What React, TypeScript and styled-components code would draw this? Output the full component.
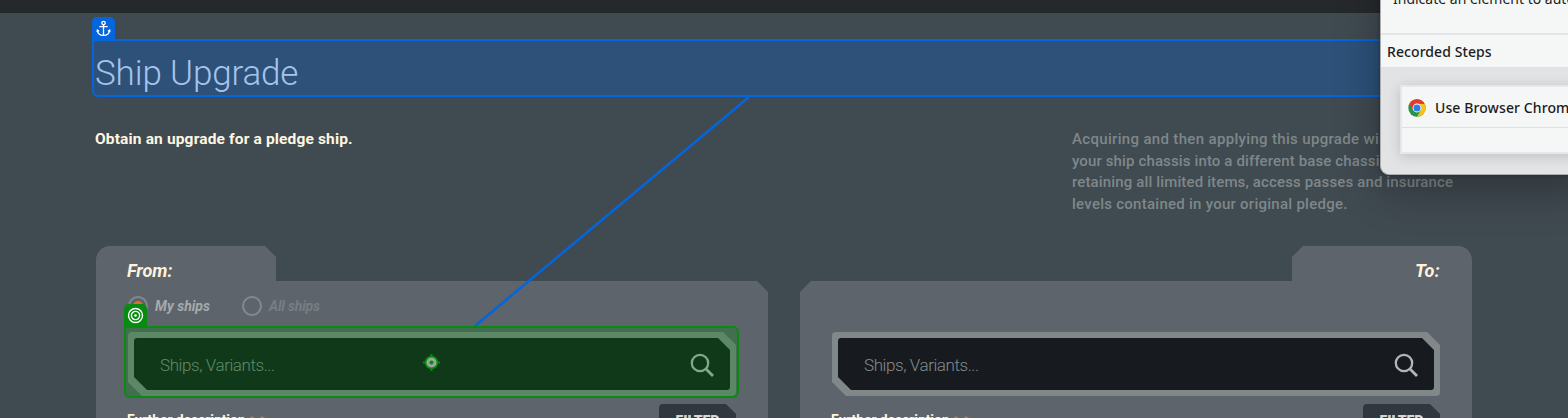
import React from 'react';
import styled, { createGlobalStyle } from 'styled-components';

const Global = createGlobalStyle`
  * { box-sizing: border-box; }
  html, body { margin: 0; width: 1568px; height: 418px; overflow: hidden; }
  body { background: #404a51; font-family: Roboto, "Liberation Sans", sans-serif; }
`;

const Page = styled.div`position: relative; width: 1568px; height: 418px; overflow: hidden; background: #404a51;`;
const TopBar = styled.div`height: 13px; background: #25292c;`;
const Main = styled.main`padding: 0 96px;`;
const Title = styled.h1`
  margin: 0 0 0 -1px; height: 84px; padding-top: 40px; font-size: 35px; line-height: 42px;
  font-weight: 300; color: #a5c4ec; white-space: nowrap; position: relative; z-index: 2;
`;
const Text = styled.span<{ $ls?: number }>`
  display: block; width: max-content; white-space: nowrap; letter-spacing: ${p => p.$ls ?? 0}px;
`;
const Intro = styled.section`display: flex; justify-content: space-between; height: 149px; padding-top: 31px;`;
const Lead = styled.p`margin: 0 0 0 -1px; font-size: 15.5px; line-height: 22px; font-weight: 700; color: #fff6e0;`;
const Note = styled.p`margin: 0; padding-top: 1px; width: 400px; font-size: 15px; line-height: 21.67px; font-weight: 500; color: #7f8789;`;
const Columns = styled.div`display: grid; grid-template-columns: 672px 672px; gap: 32px;`;
const Panel = styled.section`height: 180px; display: flex; flex-direction: column;`;
const Tab = styled.div<{ $right?: boolean }>`
  width: 180px; height: 35px; padding: 14px 32px 0 31px; background: #5d646b;
  font-size: 18px; line-height: 22px; font-weight: 700; font-style: italic; color: #fff2dc;
  display: flex;
  ${p => p.$right
    ? 'align-self: flex-end; justify-content: flex-end; border-radius: 0 14px 0 0; clip-path: polygon(0 11px, 11px 0, 100% 0, 100% 100%, 0 100%);'
    : 'border-radius: 14px 0 0 0; clip-path: polygon(0 0, 169px 0, 180px 11px, 180px 100%, 0 100%);'}
`;
const Body = styled.div<{ $right?: boolean }>`
  flex: 1; padding: 14px 32px 0; background: #5d646b;
  clip-path: ${p => p.$right
    ? 'polygon(0 11px, 11px 0, 100% 0, 100% 100%, 0 100%)'
    : 'polygon(0 0, 661px 0, 672px 11px, 672px 100%, 0 100%)'};
`;
const Options = styled.div`display: flex; height: 37px;`;
const Option = styled.div<{ $dim?: boolean }>`
  display: flex; gap: 7px; width: 114px; height: 22px; align-items: center;
  font-size: 14px; font-weight: 700; font-style: italic; color: ${p => (p.$dim ? '#777e84' : '#a4aaad')};
`;
const Radio = styled.i<{ $on?: boolean }>`
  flex: none; width: 20px; height: 20px; border-radius: 50%; border: 2px solid #838a8e;
  background: ${p => (p.$on ? 'radial-gradient(circle, #e66d20 4.6px, transparent 5.2px)' : 'none')};
`;
const SearchFrame = styled.div`
  height: 64px; padding: 6px; border-radius: 4px; background: #80888a;
  clip-path: polygon(0 0, 595px 0, 608px 13px, 608px 64px, 14px 64px, 0 50px);
`;
const SearchField = styled.div`
  height: 52px; padding: 2px 15px 0 26px; display: flex; align-items: center; justify-content: space-between;
  border-radius: 3px; background: #171b1f; color: #858b8d; font-size: 17px; font-weight: 300;
  clip-path: polygon(0 0, 584px 0, 596px 12px, 596px 52px, 13px 52px, 0 39px);
`;
const Footer = styled.div`display: flex; justify-content: space-between; padding-top: 8px;`;
const More = styled.div`
  display: flex; gap: 4px; margin-left: -1px; padding-top: 7px; font-size: 14px; line-height: 19px; font-weight: 700; color: #fff2dc;
  em { color: #e0702c; font-style: normal; letter-spacing: 3px; margin-top: -1px; }
`;
const Filter = styled.div`
  width: 77px; height: 32px; padding-top: 7px; background: #30373e; border-radius: 4px 0 0 4px; color: #d3d7d9;
  font-size: 14px; line-height: 20px; font-weight: 900; display: flex; justify-content: center;
  clip-path: polygon(0 0, 67px 0, 77px 10px, 77px 100%, 0 100%);
`;

const Highlight = styled.div<{ $target?: boolean }>`
  position: absolute; z-index: 1;
  ${p => p.$target
    ? 'left: 124px; top: 326px; width: 615px; height: 72px; border: 2px solid #078b10; background: rgba(0,138,12,.28); border-radius: 0 6px 6px 6px;'
    : 'left: 92px; top: 39px; width: 1385px; height: 58px; border: 2px solid #0565dd; background: #2d5179; border-radius: 0 6px 6px 6px;'}
`;
const Badge = styled.div<{ $target?: boolean }>`
  position: absolute; z-index: 2; width: 23px; height: 23px; border-radius: 5px 5px 0 0;
  display: grid; place-items: center;
  ${p => p.$target ? 'left: 124px; top: 304px; background: #078b10;' : 'left: 92px; top: 17px; background: #0565dd;'}
`;
const Connector = styled.svg`position: absolute; left: 0; top: 0; z-index: 1; pointer-events: none;`;
const Crosshair = styled.svg`position: absolute; left: 423px; top: 354px; z-index: 3;`;

const Recorder = styled.aside`
  position: absolute; z-index: 5; left: 1380px; top: -20px; width: 210px; height: 195px;
  border: 1px solid #aaaeb1; border-radius: 9px; overflow: hidden; background: #e2e3e5;
  font-family: "Noto Sans", sans-serif; color: #1c1c1c; font-size: 14px;
`;
const RecorderShadow = styled.div`
  position: absolute; z-index: 4; left: 1380px; top: -20px; width: 210px; height: 195px; border-radius: 9px;
  box-shadow: 0 14px 45px rgba(0,0,0,.3), 0 0 5px rgba(0,0,0,.3);
`;
const Hint = styled.div`height: 54px; padding: 7px 0 0 12px; line-height: 22px; background: #f5f7f6; border-bottom: 2px solid #e2e4e5;`;
const Heading = styled.div`height: 32px; padding: 6px 0 0 6px; line-height: 22px; font-weight: 500; background: #f5f7f6;`;
const StepCard = styled.div`
  margin: 18px 0 0 19px; width: 230px; height: 69px; background: #f5f7f6; border: 2px solid #e6e7e8;
  box-shadow: 0 2px 12px rgba(0,0,0,.16);
`;
const Step = styled.div`
  display: flex; align-items: center; gap: 9px; height: 41px; padding: 1px 0 0 6px; font-weight: 500; border-bottom: 1px solid #dfe1e2;
`;

const Magnifier = () => (
  <svg width="25" height="25" viewBox="0 0 25 25" fill="none" stroke="#b3b6b7" strokeWidth="2.3">
    <circle cx="10" cy="10" r="8.2" /><path d="M15.8 15.8l7.2 7.2" strokeWidth="2.8" />
  </svg>
);
const AnchorIcon = () => (
  <svg width="15" height="17" viewBox="0 0 15 17" fill="none" stroke="#fff" strokeWidth="1.3">
    <circle cx="7.5" cy="3" r="1.7" /><path d="M7.5 4.7v11M3.3 6.7h8.4M1.4 10.2c.3 3.4 2.6 5.2 6.1 5.2s5.8-1.8 6.1-5.2M1 12l.4-2 1.7 1.2M14 12l-.4-2-1.7 1.2" />
  </svg>
);
const TargetIcon = () => (
  <svg width="17" height="17" viewBox="0 0 17 17" fill="none" stroke="#fff" strokeWidth="1.4">
    <circle cx="8.5" cy="8.5" r="7" /><circle cx="8.5" cy="8.5" r="4.1" /><circle cx="8.5" cy="8.5" r="1.3" fill="#fff" stroke="none" />
  </svg>
);
const ChromeIcon = () => (
  <svg width="18" height="18" viewBox="0 0 18 18">
    <circle cx="9" cy="9" r="8.7" fill="#249646" />
    <path d="M9 4.65h7.54A8.7 8.7 0 0 1 9 17.7l3.77-6.5z" fill="#fbc116" />
    <path d="M1.46 4.65A8.7 8.7 0 0 1 16.54 4.65H9V9l-3.8 2.2z" fill="#e33b2e" />
    <circle cx="9" cy="9" r="4.4" fill="#fff" /><circle cx="9" cy="9" r="3.5" fill="#2b7de9" />
  </svg>
);

const ShipSearch = () => (
  <SearchFrame><SearchField><Text $ls={-0.42}>Ships, Variants...</Text><Magnifier /></SearchField></SearchFrame>
);
const PanelFooter = () => (
  <Footer>
    <More><Text $ls={-0.1}>Further description</Text><em>&gt;&gt;</em></More>
    <Filter><Text>FILTER</Text></Filter>
  </Footer>
);

export default function App() {
  return (
    <Page>
      <Global />
      <TopBar />
      <Main>
        <Title><Text $ls={-0.15}>Ship Upgrade</Text></Title>
        <Intro>
          <Lead><Text $ls={0.15}>Obtain an upgrade for a pledge ship.</Text></Lead>
          <Note>
            <Text $ls={0.33}>Acquiring and then applying this upgrade will convert</Text>
            <Text $ls={0.13}>your ship chassis into a different base chassis while</Text>
            <Text $ls={0.14}>retaining all limited items, access passes and insurance</Text>
            <Text $ls={0.26}>levels contained in your original pledge.</Text>
          </Note>
        </Intro>
        <Columns>
          <Panel>
            <Tab><Text>From:</Text></Tab>
            <Body>
              <Options>
                <Option><Radio $on /><Text>My ships</Text></Option>
                <Option $dim><Radio /><Text $ls={-0.2}>All ships</Text></Option>
              </Options>
              <ShipSearch />
              <PanelFooter />
            </Body>
          </Panel>
          <Panel>
            <Tab $right><Text $ls={0.3}>To:</Text></Tab>
            <Body $right>
              <Options />
              <ShipSearch />
              <PanelFooter />
            </Body>
          </Panel>
        </Columns>
      </Main>
      <Highlight />
      <Badge><AnchorIcon /></Badge>
      <Connector width="1568" height="418"><path d="M749 97L475 326" stroke="#0565dd" strokeWidth="2.5" /></Connector>
      <Highlight $target />
      <Badge $target><TargetIcon /></Badge>
      <Crosshair width="17" height="17" viewBox="0 0 17 17" fill="none">
        <path d="M8.5 0v17M0 8.5h17" stroke="#078b10" strokeWidth="2" />
        <circle cx="8.5" cy="8.5" r="6.8" fill="#078b10" />
        <circle cx="8.5" cy="8.5" r="3.6" stroke="#9aa69b" strokeWidth="3" />
      </Crosshair>
      <RecorderShadow />
      <Recorder>
        <Hint><Text>Indicate an element to automate</Text></Hint>
        <Heading><Text $ls={0.08}>Recorded Steps</Text></Heading>
        <StepCard><Step><ChromeIcon /><Text $ls={0.1}>Use Browser Chrome</Text></Step></StepCard>
      </Recorder>
    </Page>
  );
}
